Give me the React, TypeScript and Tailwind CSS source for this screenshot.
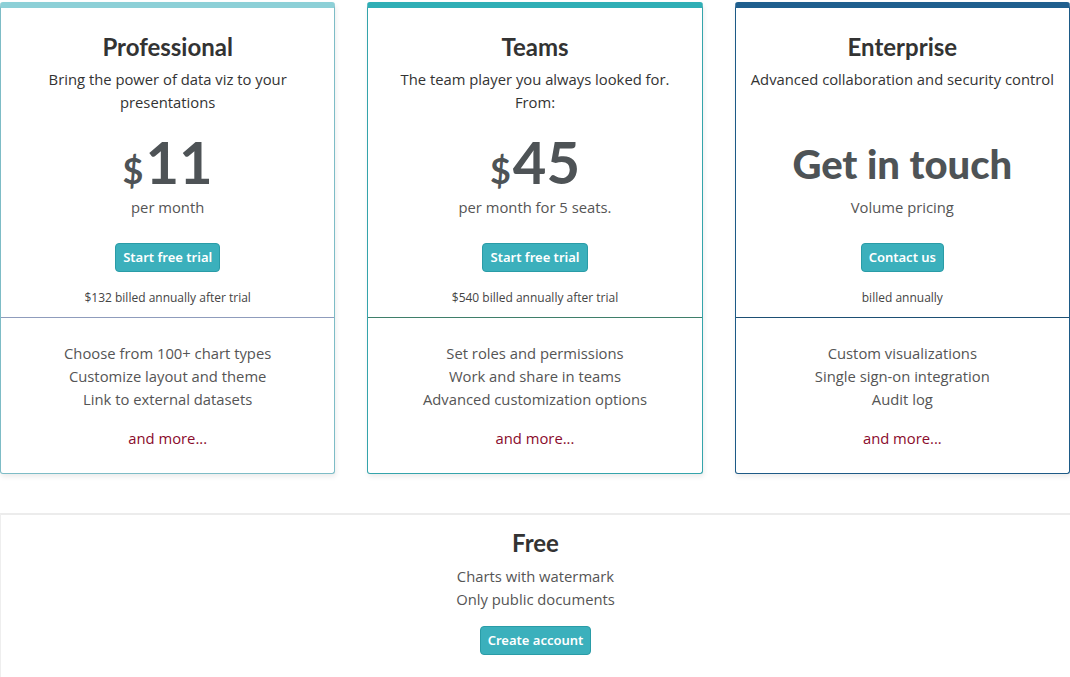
import React from 'react'

type Plan = {
  name: string
  blurb: string[]
  price?: string
  headline?: string
  unit: string
  cta: string
  billed: string
  features: string[]
  bar: string
  edge: string
  rule: string
}

const plans: Plan[] = [
  {
    name: 'Professional',
    blurb: ['Bring the power of data viz to your', 'presentations'],
    price: '11',
    unit: 'per month',
    cta: 'Start free trial',
    billed: '$132 billed annually after trial',
    features: ['Choose from 100+ chart types', 'Customize layout and theme', 'Link to external datasets'],
    bar: 'border-t-[#8dd0d7]',
    edge: 'border-x-[#7dbcc6] border-b-[#7dbcc6]',
    rule: 'border-[#8f9cbc]',
  },
  {
    name: 'Teams',
    blurb: ['The team player you always looked for.', 'From:'],
    price: '45',
    unit: 'per month for 5 seats.',
    cta: 'Start free trial',
    billed: '$540 billed annually after trial',
    features: ['Set roles and permissions', 'Work and share in teams', 'Advanced customization options'],
    bar: 'border-t-[#2fafb6]',
    edge: 'border-x-[#34a4ab] border-b-[#34a4ab]',
    rule: 'border-[#3f7f6a]',
  },
  {
    name: 'Enterprise',
    blurb: ['Advanced collaboration and security control'],
    headline: 'Get in touch',
    unit: 'Volume pricing',
    cta: 'Contact us',
    billed: 'billed annually',
    features: ['Custom visualizations', 'Single sign-on integration', 'Audit log'],
    bar: 'border-t-[#1f5f8e]',
    edge: 'border-x-[#1d5a86] border-b-[#1d5a86]',
    rule: 'border-[#1d4f74]',
  },
]

const heading = "font-['Lato',sans-serif]"
const body = "font-['Open_Sans',sans-serif]"

function Button({ label }: { label: string }) {
  return (
    <button className="h-[29px] rounded-sm border border-[#2a9ca7] bg-[#3bb0bc] px-[7px] text-[13px] font-semibold text-white">
      {label}
    </button>
  )
}

function PlanCard({ p }: { p: Plan }) {
  return (
    <div
      className={`flex flex-col rounded-[3px] border border-t-[6px] bg-white shadow-[1px_3px_5px_rgba(0,0,0,0.08)] ${p.bar} ${p.edge}`}
    >
      <div className="flex h-[309px] flex-col items-center pt-[25px] text-center">
        <h2 className={`${heading} text-[24px] font-bold leading-[28px] text-[#333]`}>{p.name}</h2>
        <div className={`${body} mt-[7px] h-[46px] text-[14.8px] leading-[23px] text-[#333]`}>
          {p.blurb.map((l) => (
            <p key={l}>{l}</p>
          ))}
        </div>
        <div className="mt-[22px] flex h-[60px] items-center justify-center text-[#4e5356]">
          {p.price ? (
            <span className={`${heading} text-[58px] font-bold leading-[58px]`}>
              <span className="mr-[2px] text-[36px]">$</span>
              {p.price}
            </span>
          ) : (
            <span className={`${heading} -mt-[4px] text-[40px] font-black leading-none`}>{p.headline}</span>
          )}
        </div>
        <p className={`${body} text-[14.8px] leading-[23px] text-[#555]`}>{p.unit}</p>
        <div className="mt-[24px]">
          <Button label={p.cta} />
        </div>
        <p className={`${body} mt-[17px] text-[12px] leading-[18px] text-[#444]`}>{p.billed}</p>
      </div>
      <div className={`flex flex-col items-center border-t pb-[23px] pt-[24px] text-center ${p.rule}`}>
        <ul className={`${body} text-[14.8px] leading-[23px] text-[#555]`}>
          {p.features.map((f) => (
            <li key={f}>{f}</li>
          ))}
        </ul>
        <a className={`${body} mt-[16px] text-[14.8px] leading-[23px] text-[#8a0b2c]`}>and more...</a>
      </div>
    </div>
  )
}

export default function App() {
  return (
    <div className="min-h-screen w-[1070px] overflow-hidden bg-white">
      <div className="grid grid-cols-3 gap-[32px] pt-[2px]">
        {plans.map((p) => (
          <PlanCard key={p.name} p={p} />
        ))}
      </div>
      <div className="mt-[39px] flex w-[1080px] flex-col items-center border-l border-t-2 border-l-[#eee] border-t-[#ececec] pb-[40px] pt-[14px] pr-[10px] text-center">
        <h2 className={`${heading} text-[24px] font-bold leading-[28px] text-[#333]`}>Free</h2>
        <div className={`${body} mt-[8px] text-[14.8px] leading-[23px] text-[#555]`}>
          <p>Charts with watermark</p>
          <p>Only public documents</p>
        </div>
        <div className="mt-[15px]">
          <Button label="Create account" />
        </div>
      </div>
    </div>
  )
}
